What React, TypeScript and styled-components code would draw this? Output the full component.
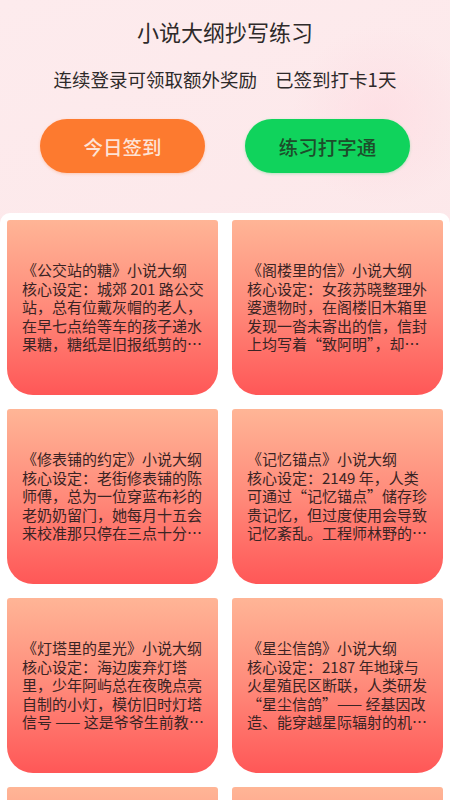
import styled, { createGlobalStyle } from "styled-components";

const GlobalStyle = createGlobalStyle`
  body {
    margin: 0;
    background: #fde9ea;
    font-family: "Noto Sans CJK SC", "Noto Sans", sans-serif;
  }
`;

const Page = styled.div`
  width: 450px;
  min-height: 800px;
  background:
    radial-gradient(circle at 85% 12%, rgba(255, 214, 222, 0.5) 0, rgba(255, 214, 222, 0) 90px),
    linear-gradient(160deg, #fdebed 0%, #fce6e8 60%, #fde9eb 100%);
  display: flex;
  flex-direction: column;
`;

const Header = styled.div`
  display: flex;
  flex-direction: column;
  align-items: center;
  padding-top: 16px;
`;

const Title = styled.h1`
  margin: 0;
  font-size: 22px;
  font-weight: 400;
  line-height: 30px;
  color: #2e2a2a;
`;

const Subtitle = styled.div`
  margin-top: 20px;
  display: flex;
  gap: 18px;
  font-size: 18.5px;
  line-height: 26px;
  color: #2e2a2a;
`;

const ButtonRow = styled.div`
  display: flex;
  justify-content: space-between;
  width: 370px;
  margin-top: 27px;
`;

const PillButton = styled.button<{ $tone: "orange" | "green" }>`
  width: 165px;
  height: 54px;
  border: none;
  border-radius: 27px;
  font-family: inherit;
  font-size: 19.5px;
  font-weight: 500;
  background: ${(p) => (p.$tone === "orange" ? "#fd7a2f" : "#10d35c")};
  color: ${(p) => (p.$tone === "orange" ? "#fde3d6" : "#1d4d2b")};
  box-shadow: 0 1px 3px
    ${(p) => (p.$tone === "orange" ? "rgba(253,122,47,0.3)" : "rgba(16,211,92,0.3)")};
`;

const Panel = styled.div`
  margin-top: 40px;
  background: #ffffff;
  border-radius: 10px 10px 0 0;
  padding: 7px;
  display: grid;
  grid-template-columns: 211px 211px;
  column-gap: 14px;
  row-gap: 14px;
  flex: 1;
`;

const Card = styled.div`
  height: 175px;
  border-radius: 3px 3px 26px 26px;
  background: linear-gradient(180deg, #ffb596 0%, #ff8a7a 50%, #ff5757 100%);
  display: flex;
  align-items: center;
  padding: 0 11px 0 15px;
  box-sizing: border-box;
`;

const CardText = styled.p`
  margin: 0;
  font-size: 15px;
  line-height: 18.5px;
  color: #3a2424;
  white-space: pre-line;
  display: -webkit-box;
  -webkit-line-clamp: 5;
  -webkit-box-orient: vertical;
  overflow: hidden;
`;

const outlines = [
  "《公交站的糖》小说大纲\n核心设定：城郊 201 路公交站，总有位戴灰帽的老人，在早七点给等车的孩子递水果糖，糖纸是旧报纸剪的小方块，上面写着一句话。",
  "《阁楼里的信》小说大纲\n核心设定：女孩苏晓整理外婆遗物时，在阁楼旧木箱里发现一沓未寄出的信，信封上均写着\u200B“致阿明”，却没有地址。",
  "《修表铺的约定》小说大纲\n核心设定：老街修表铺的陈师傅，总为一位穿蓝布衫的老奶奶留门，她每月十五会来校准那只停在三点十分的怀表。",
  "《记忆锚点》小说大纲\n核心设定：2149 年，人类可通过\u200B“记忆锚点”储存珍贵记忆，但过度使用会导致记忆紊乱。工程师林野的妹妹因此失忆。",
  "《灯塔里的星光》小说大纲\n核心设定：海边废弃灯塔里，少年阿屿总在夜晚点亮自制的小灯，模仿旧时灯塔信号 —— 这是爷爷生前教他的暗号。",
  "《星尘信鸽》小说大纲\n核心设定：2187 年地球与火星殖民区断联，人类研发\u200B“星尘信鸽”—— 经基因改造、能穿越星际辐射的机械信鸽。",
  "《雨巷书店》小说大纲\n核心设定：江南小城的雨巷深处，有一家只在下雨天开门的旧书店。",
  "《风筝线》小说大纲\n核心设定：乡村小学的老师每年春天都带孩子们放风筝。",
];

export default function App() {
  return (
    <Page>
      <GlobalStyle />
      <Header>
        <Title>小说大纲抄写练习</Title>
        <Subtitle>
          <span>连续登录可领取额外奖励</span>
          <span>已签到打卡1天</span>
        </Subtitle>
        <ButtonRow>
          <PillButton $tone="orange">今日签到</PillButton>
          <PillButton $tone="green">练习打字通</PillButton>
        </ButtonRow>
      </Header>
      <Panel>
        {outlines.map((text, i) => (
          <Card key={i}>
            <CardText>{text}</CardText>
          </Card>
        ))}
      </Panel>
    </Page>
  );
}
